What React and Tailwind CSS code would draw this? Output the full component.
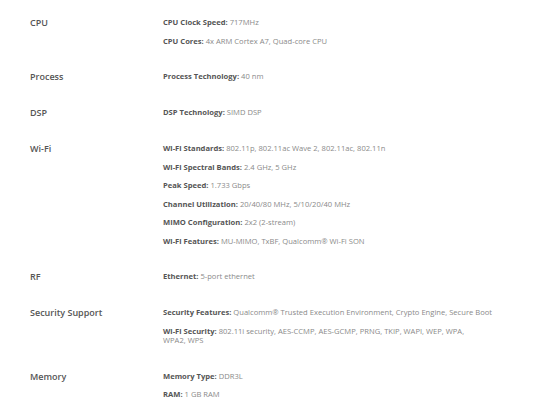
const specs = [
  {
    title: "CPU",
    items: [
      ["CPU Clock Speed:", "717MHz"],
      ["CPU Cores:", "4x ARM Cortex A7, Quad-core CPU"],
    ],
  },
  { title: "Process", items: [["Process Technology:", "40 nm"]] },
  { title: "DSP", items: [["DSP Technology:", "SIMD DSP"]] },
  {
    title: "Wi-Fi",
    items: [
      ["Wi-Fi Standards:", "802.11p, 802.11ac Wave 2, 802.11ac, 802.11n"],
      ["Wi-Fi Spectral Bands:", "2.4 GHz, 5 GHz"],
      ["Peak Speed:", "1.733 Gbps"],
      ["Channel Utilization:", "20/40/80 MHz, 5/10/20/40 MHz"],
      ["MIMO Configuration:", "2x2 (2-stream)"],
      ["Wi-Fi Features:", "MU-MIMO, TxBF, Qualcomm® Wi-Fi SON"],
    ],
  },
  { title: "RF", items: [["Ethernet:", "5-port ethernet"]] },
  {
    title: "Security Support",
    items: [
      ["Security Features:", "Qualcomm® Trusted Execution Environment, Crypto Engine, Secure Boot"],
      [
        "Wi-Fi Security:",
        <>
          802.11i security, AES-CCMP, AES-GCMP, PRNG, TKIP, WAPI, WEP, WPA,
          <br />
          WPA2, WPS
        </>,
      ],
    ],
  },
  {
    title: "Memory",
    items: [
      ["Memory Type:", "DDR3L"],
      ["RAM:", "1 GB RAM"],
    ],
  },
];

const App = () => {
  return (
    <div className="min-h-screen bg-white pl-[30px] pt-[18px] font-['Open_Sans',sans-serif]">
      <div className="flex flex-col gap-[26px]">
        {specs.map((s) => (
          <div key={s.title} className="flex">
            <div className="w-[133px] shrink-0 text-[9px] leading-[10px] font-semibold text-[#555]">
              {s.title}
            </div>
            <div className="flex w-[370px] flex-col gap-[9px]">
              {s.items.map(([k, v]) => (
                <p key={k} className="text-[7.6px] leading-[9.5px] text-[#8a8a8a]">
                  <span className="font-bold text-[#555]">{k}</span> {v}
                </p>
              ))}
            </div>
          </div>
        ))}
      </div>
    </div>
  );
};

export default App;
